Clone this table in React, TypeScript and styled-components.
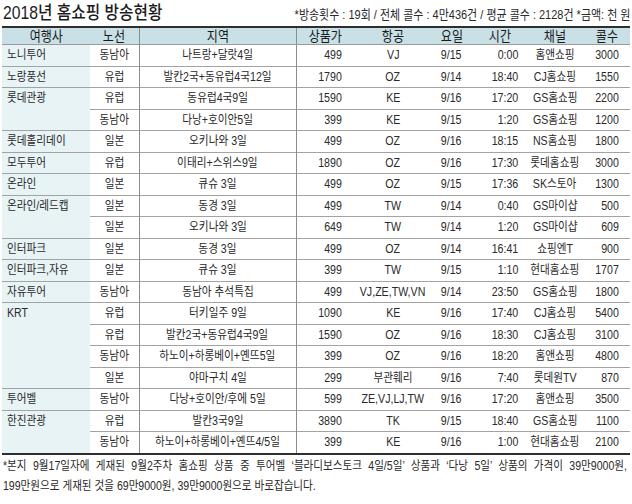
import React from 'react';
import styled, { createGlobalStyle } from 'styled-components';

const GlobalStyle = createGlobalStyle`
  html, body { margin: 0; padding: 0; background: #ffffff; }
  body {
    width: 632px;
    height: 504px;
    overflow: hidden;
    font-family: "Liberation Sans", "Noto Sans CJK KR", sans-serif;
    color: #2a2a2a;
  }
`;

const Page = styled.div`
  width: 632px;
  height: 504px;
  box-sizing: border-box;
  padding: 0 2px;
  display: flex;
  flex-direction: column;
`;

const TitleBar = styled.header`
  height: 26px;
  box-sizing: border-box;
  display: flex;
  align-items: flex-end;
  padding: 0 0 3px 1px;
`;

const Title = styled.h1`
  flex: none;
  margin: 0;
  font-family: "Liberation Sans", "Noto Sans CJK KR", sans-serif;
  font-size: 18.5px;
  font-weight: 500;
  line-height: 20px;
  color: #1c1c1c;
  white-space: nowrap;
  transform: scaleX(0.85);
  transform-origin: left bottom;
`;

const Summary = styled.div`
  flex: 1 1 auto;
  margin-left: -140px;
  display: flex;
  justify-content: flex-end;
`;

const SummaryText = styled.span`
  flex: none;
  font-size: 13px;
  line-height: 16px;
  white-space: nowrap;
  color: #2a2a2a;
  transform: scaleX(0.845);
  transform-origin: right bottom;
`;

const Table = styled.table`
  width: 628px;
  border-collapse: collapse;
  table-layout: fixed;
  border-top: 2px solid #2e2e2e;
  border-bottom: 2px solid #2e2e2e;
`;

type Align = 'left' | 'center' | 'right';

const Th = styled.th<{ $line?: boolean }>`
  height: 16px;
  padding: 0;
  background: #c9e0e6;
  border-bottom: 1px solid #9a9a9a;
  border-right: ${p => (p.$line ? '1px solid #8c8c8c' : 'none')};
  font-weight: normal;
`;

const Td = styled.td<{ $first?: boolean; $line?: boolean }>`
  height: 20.5px;
  padding: 0;
  background: ${p => (p.$first ? '#e8f3f6' : '#ffffff')};
  border-top: 1px solid #a3a3a3;
  border-right: ${p => (p.$line ? '1px solid #8c8c8c' : 'none')};
  vertical-align: ${p => (p.$first ? 'top' : 'middle')};
`;

const Cell = styled.div<{ $align: Align; $pad?: number; $top?: boolean }>`
  display: flex;
  height: ${p => (p.$top ? '20px' : 'auto')};
  align-items: center;
  justify-content: ${p =>
    p.$align === 'left' ? 'flex-start' : p.$align === 'right' ? 'flex-end' : 'center'};
  padding-left: ${p => (p.$align === 'left' ? `${p.$pad ?? 0}px` : '0')};
  padding-right: ${p => (p.$align === 'right' ? `${p.$pad ?? 0}px` : '0')};
`;

const Txt = styled.span<{ $align: Align; $head?: boolean }>`
  flex: none;
  white-space: nowrap;
  font-size: ${p => (p.$head ? '14px' : '12.5px')};
  line-height: 16px;
  color: ${p => (p.$head ? '#1a1a1a' : '#2a2a2a')};
  transform: scaleX(${p => (p.$head ? 0.86 : 0.85)});
  transform-origin: ${p => p.$align} center;
`;

const Footnote = styled.div`
  padding-top: 1px;
  display: flex;
  flex-direction: column;
`;

const NoteLine = styled.div<{ $justify?: boolean }>`
  width: ${624 / 0.845}px;
  font-size: 12.5px;
  line-height: 20px;
  color: #2a2a2a;
  text-align: left;
  text-align-last: ${p => (p.$justify ? 'justify' : 'left')};
  white-space: ${p => (p.$justify ? 'normal' : 'nowrap')};
  transform: scaleX(0.845);
  transform-origin: left center;
  margin-left: 1px;
`;

type Row = {
  agency?: string;
  span?: number;
  route: string;
  area: string;
  price: string;
  air: string;
  day: string;
  time: string;
  channel: string;
  calls: string;
};

const rows: Row[] = [
  { agency: '노니투어', route: '동남아', area: '나트랑+달랏4일', price: '499', air: 'VJ', day: '9/15', time: '0:00', channel: '홈앤쇼핑', calls: '3000' },
  { agency: '노랑풍선', route: '유럽', area: '발칸2국+동유럽4국12일', price: '1790', air: 'OZ', day: '9/14', time: '18:40', channel: 'CJ홈쇼핑', calls: '1550' },
  { agency: '롯데관광', span: 2, route: '유럽', area: '동유럽4국9일', price: '1590', air: 'KE', day: '9/16', time: '17:20', channel: 'GS홈쇼핑', calls: '2200' },
  { route: '동남아', area: '다낭+호이안5일', price: '399', air: 'KE', day: '9/15', time: '1:20', channel: 'GS홈쇼핑', calls: '1200' },
  { agency: '롯데홀리데이', route: '일본', area: '오키나와  3일', price: '499', air: 'OZ', day: '9/16', time: '18:15', channel: 'NS홈쇼핑', calls: '1800' },
  { agency: '모두투어', route: '유럽', area: '이태리+스위스9일', price: '1890', air: 'OZ', day: '9/16', time: '17:30', channel: '롯데홈쇼핑', calls: '3000' },
  { agency: '온라인', route: '일본', area: '큐슈  3일', price: '499', air: 'OZ', day: '9/15', time: '17:36', channel: 'SK스토아', calls: '1300' },
  { agency: '온라인/레드캡', span: 2, route: '일본', area: '동경  3일', price: '499', air: 'TW', day: '9/14', time: '0:40', channel: 'GS마이샵', calls: '500' },
  { route: '일본', area: '오키나와  3일', price: '649', air: 'TW', day: '9/14', time: '1:20', channel: 'GS마이샵', calls: '609' },
  { agency: '인터파크', route: '일본', area: '동경  3일', price: '499', air: 'OZ', day: '9/14', time: '16:41', channel: '쇼핑엔T', calls: '900' },
  { agency: '인터파크,자유', route: '일본', area: '큐슈  3일', price: '399', air: 'TW', day: '9/15', time: '1:10', channel: '현대홈쇼핑', calls: '1707' },
  { agency: '자유투어', route: '동남아', area: '동남아  추석특집', price: '499', air: 'VJ,ZE,TW,VN', day: '9/14', time: '23:50', channel: 'GS홈쇼핑', calls: '1800' },
  { agency: 'KRT', span: 4, route: '유럽', area: '터키일주  9일', price: '1090', air: 'KE', day: '9/16', time: '17:40', channel: 'CJ홈쇼핑', calls: '5400' },
  { route: '유럽', area: '발칸2국+동유럽4국9일', price: '1590', air: 'OZ', day: '9/16', time: '18:30', channel: 'CJ홈쇼핑', calls: '3100' },
  { route: '동남아', area: '하노이+하롱베이+옌뜨5일', price: '399', air: 'OZ', day: '9/16', time: '18:20', channel: '홈앤쇼핑', calls: '4800' },
  { route: '일본', area: '야마구치  4일', price: '299', air: '부관훼리', day: '9/16', time: '7:40', channel: '롯데원TV', calls: '870' },
  { agency: '투어벨', route: '동남아', area: '다낭+호이안/후에  5일', price: '599', air: 'ZE,VJ,LJ,TW', day: '9/16', time: '17:20', channel: '홈앤쇼핑', calls: '3500' },
  { agency: '한진관광', span: 2, route: '유럽', area: '발칸3국9일', price: '3890', air: 'TK', day: '9/15', time: '18:40', channel: 'GS홈쇼핑', calls: '1100' },
  { route: '동남아', area: '하노이+하롱베이+옌뜨4/5일', price: '399', air: 'KE', day: '9/16', time: '1:00', channel: '현대홈쇼핑', calls: '2100' },
];

const widths = [88, 49, 157, 59, 76, 41, 55, 56, 47];

const headers: { label: string; line?: boolean }[] = [
  { label: '여행사' },
  { label: '노선', line: true },
  { label: '지역', line: true },
  { label: '상품가' },
  { label: '항공' },
  { label: '요일' },
  { label: '시간' },
  { label: '채널' },
  { label: '콜수' },
];

const T = ({ align, pad, children }: { align: Align; pad?: number; children: React.ReactNode }) => (
  <Cell $align={align} $pad={pad}>
    <Txt $align={align}>{children}</Txt>
  </Cell>
);

export default function App() {
  return (
    <>
      <GlobalStyle />
      <Page>
        <TitleBar>
          <Title>2018년 홈쇼핑 방송현황</Title>
          <Summary>
            <SummaryText>*방송횟수 : 19회 / 전체 콜수 : 4만436건 / 평균 콜수 : 2128건 *금액: 천 원</SummaryText>
          </Summary>
        </TitleBar>
        <Table>
          <colgroup>
            {widths.map((w, i) => (
              <col key={i} style={{ width: w }} />
            ))}
          </colgroup>
          <thead>
            <tr>
              {headers.map(h => (
                <Th key={h.label} $line={h.line}>
                  <Cell $align="center">
                    <Txt $align="center" $head>
                      {h.label}
                    </Txt>
                  </Cell>
                </Th>
              ))}
            </tr>
          </thead>
          <tbody>
            {rows.map((r, i) => (
              <tr key={i}>
                {r.agency && (
                  <Td $first rowSpan={r.span ?? 1}>
                    <Cell $align="left" $pad={5} $top>
                      <Txt $align="left">{r.agency}</Txt>
                    </Cell>
                  </Td>
                )}
                <Td $line>
                  <T align="center">{r.route}</T>
                </Td>
                <Td $line>
                  <T align="center">{r.area}</T>
                </Td>
                <Td>
                  <T align="right" pad={13}>{r.price}</T>
                </Td>
                <Td>
                  <T align="center">{r.air}</T>
                </Td>
                <Td>
                  <T align="center">{r.day}</T>
                </Td>
                <Td>
                  <T align="right" pad={9}>{r.time}</T>
                </Td>
                <Td>
                  <T align="center">{r.channel}</T>
                </Td>
                <Td>
                  <T align="right" pad={11}>{r.calls}</T>
                </Td>
              </tr>
            ))}
          </tbody>
        </Table>
        <Footnote>
          <NoteLine $justify>
            *본지 9월17일자에 게재된 9월2주차 홈쇼핑 상품 중 투어벨 ‘블라디보스토크 4일/5일’ 상품과 ‘다낭 5일’ 상품의 가격이 39만9000원,
          </NoteLine>
          <NoteLine>199만원으로 게재된 것을 69만9000원, 39만9000원으로 바로잡습니다.</NoteLine>
        </Footnote>
      </Page>
    </>
  );
}
